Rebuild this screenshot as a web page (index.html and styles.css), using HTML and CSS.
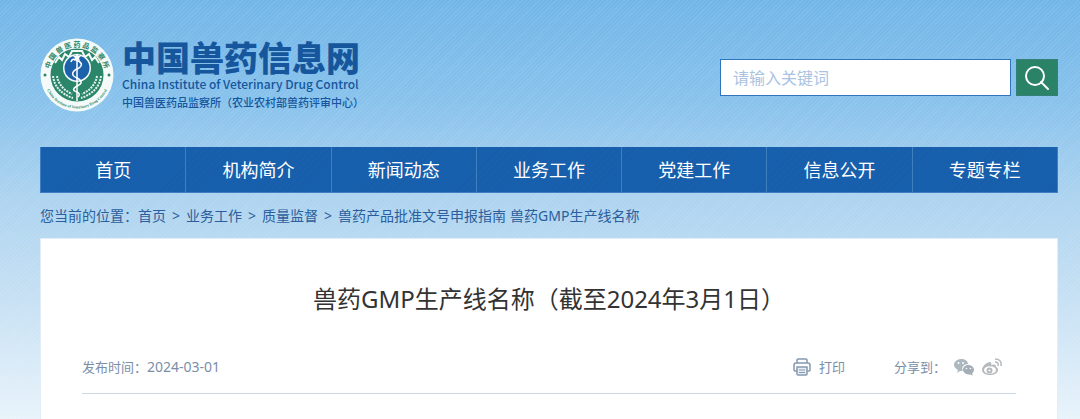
FILE: index.html
```
<!DOCTYPE html>
<html lang="zh-CN">
<head>
    <meta charset="UTF-8">
    <meta name="viewport" content="width=device-width, initial-scale=1.0">
    <title>兽药GMP生产线名称</title>
    <link rel="stylesheet" href="styles.css">
</head>
<body>
    <div class="wrapper">
        <header class="header">
            <a class="logo" href="#">
                <svg class="logo-badge" viewBox="0 0 74 74" aria-hidden="true">
                    <defs>
                        <path id="arc-top" d="M10.500 46 A28 28 0 1 1 63.500 46"/>
                        <path id="arc-bottom" d="M3.500 37 A33.500 33.500 0 0 0 70.500 37"/>
                    </defs>
                    <circle cx="37" cy="37" r="36.500" fill="#f4faf8"/>
                    <circle cx="37" cy="37" r="26.500" fill="#2a8569"/>
                    <path d="M15 25l4-6 3 3 3-6 4 3 3-6h10l3 6 4-3 3 6 3-3 4 6" fill="none" stroke="#f4faf8" stroke-width="2"/>
                    <circle cx="37" cy="30" r="14" fill="#f4faf8"/>
                    <circle cx="37" cy="30" r="12.500" fill="#1c62ab"/>
                    <g fill="none" stroke="#e3f2ec" stroke-width="2" stroke-dasharray="2 1">
                        <path d="M13 38Q15 54 33 60"/>
                        <path d="M61 38Q59 54 41 60"/>
                        <path d="M17 38Q19 50 32 56"/>
                        <path d="M57 38Q55 50 42 56"/>
                    </g>
                    <path d="M37 20v43" stroke="#fff" stroke-width="1.500"/>
                    <path d="M31 24q1-4 5-2c6 2 7 5 3 8-7 3-9 7-2 10 6 3 5 6 0 8-5 3-4 5 0 6q4 2 1 5" fill="none" stroke="#fff" stroke-width="1.500"/>
                    <path d="M37 15l1 3h3l-2 2 1 3-3-2-3 2 1-3-2-2h3z" fill="#fff"/>
                    <circle cx="5" cy="37" r="1.500" fill="#2a8569"/>
                    <circle cx="69" cy="37" r="1.500" fill="#2a8569"/>
                    <text class="badge-cn"><textPath href="#arc-top" startOffset="50%">中 国 兽 医 药 品 监 察 所</textPath></text>
                    <text class="badge-en"><textPath href="#arc-bottom" startOffset="50%">China Institute of Veterinary Drug Control</textPath></text>
                </svg>
                <span class="logo-text">
                    <strong class="logo-name">中国兽药信息网</strong>
                    <span class="logo-en">China Institute of Veterinary Drug Control</span>
                    <span class="logo-org">中国兽医药品监察所（农业农村部兽药评审中心）</span>
                </span>
            </a>
            <form class="search">
                <input class="search-input" type="text" placeholder="请输入关键词" aria-label="请输入关键词">
                <button class="search-btn" type="button" aria-label="搜索">
                    <svg viewBox="0 0 26 26" width="26" height="26"><circle cx="11" cy="11" r="9"/><path d="M17 17l7 7"/></svg>
                </button>
            </form>
        </header>

        <nav class="nav">
            <a href="#">首页</a>
            <a href="#">机构简介</a>
            <a href="#">新闻动态</a>
            <a href="#">业务工作</a>
            <a href="#">党建工作</a>
            <a href="#">信息公开</a>
            <a href="#">专题专栏</a>
        </nav>

        <div class="crumbs">
            <span>您当前的位置：</span>
            <a href="#">首页</a>
            <span class="sep">&gt;</span>
            <a href="#">业务工作</a>
            <span class="sep">&gt;</span>
            <a href="#">质量监督</a>
            <span class="sep">&gt;</span>
            <a href="#">兽药产品批准文号申报指南</a>
            <span class="current">兽药GMP生产线名称</span>
        </div>

        <main class="content">
            <h1 class="title">兽药GMP生产线名称（截至2024年3月1日）</h1>
            <div class="meta">
                <span>发布时间：<time>2024-03-01</time></span>
                <div class="tools">
                    <button class="print" type="button">
                        <svg viewBox="0 0 18 18" width="18" height="18" fill="none" stroke="#8599b0" stroke-width="1.500">
                            <path d="M4 5V2q0-1 1-1h8q1 0 1 1v3M4 13H2q-1 0-1-1V7q0-2 2-2h12q2 0 2 2v5q0 1-1 1h-2"/>
                            <path d="M4 9h10v7q0 1-1 1H5q-1 0-1-1z" fill="#e9eef3"/>
                            <path d="M6 12h6M6 14.500h6" stroke-width="1"/>
                        </svg>
                        打印
                    </button>
                    <div class="share">
                        <span>分享到：</span>
                        <a href="#" aria-label="微信">
                            <svg viewBox="0 0 20 18" width="20" height="18">
                                <path d="M7 1c4 0 7 2 7 5-5 0-7 4-5 7H6l-3 2 1-3C2 11 0 9 0 7c0-3 3-6 7-6z" fill="#adb7be"/>
                                <path d="M14 7c3 0 6 2 6 4.500 0 2-1 3-2 4l1 2-3-1c-4 0-7-2-7-5 0-2 2-4.500 5-4.500z" fill="#a3aeb6"/>
                                <g fill="#fff"><circle cx="4.500" cy="5" r="1"/><circle cx="9" cy="5" r="1"/><circle cx="12.500" cy="10.500" r=".8"/><circle cx="16.500" cy="10.500" r=".8"/></g>
                            </svg>
                        </a>
                        <a href="#" aria-label="微博">
                            <svg viewBox="0 0 20 18" width="20" height="18" fill="none" stroke="#b6b9bc">
                                <path d="M8 4c1 0 2 1 1 3 3-1 5-1 5 2 2 1 2 2 2 3 0 3-4 5-8 5s-8-2-8-5c0-4 5-8 8-8z" fill="#b6b9bc" stroke="none"/>
                                <ellipse cx="8" cy="12" rx="6" ry="3.800" fill="#fff" stroke="none"/>
                                <circle cx="7.500" cy="12.500" r="2" stroke-width="2"/>
                                <path d="M13 4q4 0 3 4M13 1q7 0 6 7" stroke-width="1.500"/>
                            </svg>
                        </a>
                    </div>
                </div>
            </div>
        </main>
    </div>
</body>
</html>
```
FILE: styles.css
```
* {
    box-sizing: border-box;
}
body {
    margin: 0;
    min-height: 100vh;
    display: flex;
    font-family: "Noto Sans", "Noto Sans CJK SC", sans-serif;
    font-size: 14px;
    color: #2a5e9c;
    background:
        repeating-linear-gradient(135deg, rgba(255, 255, 255, 0.08) 0 1px, transparent 1px 3px),
        linear-gradient(#72b6e8 0, #88c2ec 100px, #aed4f0 200px, #c4dff3 290px, #e8f3fb 419px);
}
a {
    color: inherit;
    text-decoration: none;
}
.wrapper {
    flex: 1;
    display: flex;
    flex-direction: column;
    padding: 0 22px 0 40px;
}
.header {
    display: flex;
    justify-content: space-between;
    align-items: center;
    height: 147px;
    padding-top: 3px;
}
.logo {
    display: flex;
    align-items: center;
    gap: 8px;
    color: #15569d;
}
.logo-badge {
    width: 74px;
    height: 74px;
}
.badge-cn,
.badge-en {
    font-weight: bold;
    text-anchor: middle;
    fill: #2a8569;
}
.badge-cn {
    font-family: "Noto Sans CJK SC", sans-serif;
    font-size: 7px;
}
.badge-en {
    font-family: "Liberation Serif", serif;
    font-size: 4px;
}
.logo-text {
    display: flex;
    flex-direction: column;
    font-family: "Noto Sans CJK SC", sans-serif;
    white-space: nowrap;
}
.logo-name {
    font-size: 34px;
    line-height: 38px;
    font-weight: 900;
}
.logo-en {
    font-size: 12px;
    line-height: 16px;
    font-weight: 500;
}
.logo-org {
    font-size: 11px;
    line-height: 20px;
    font-weight: 500;
}
.search {
    display: flex;
    gap: 5px;
    padding-top: 5px;
}
.search-input {
    width: 291px;
    height: 37px;
    padding: 0 12px;
    border: 1px solid #2f75bd;
    background: #fff;
    font: inherit;
    font-size: 16px;
}
.search-input::placeholder {
    color: #a9c3e1;
}
.search-btn {
    display: flex;
    align-items: center;
    justify-content: center;
    width: 42px;
    height: 37px;
    padding: 0;
    border: 1px solid #357f79;
    background: #2a8366;
}
.search-btn svg {
    fill: none;
    stroke: #fff;
    stroke-width: 2;
    stroke-linecap: round;
}
.nav {
    display: flex;
    border: 1px solid #3d7fc0;
    border-width: 0 1px 1px;
    background: repeating-linear-gradient(135deg, #1a5ca7 0 1px, #1760ad 1px 5px);
}
.nav a {
    flex: 1;
    padding-top: 1px;
    color: #fff;
    font-size: 18px;
    line-height: 44px;
    text-align: center;
}
.nav a + a {
    border-left: 1px solid #3f7fbf;
}
.crumbs {
    display: flex;
    line-height: 20px;
    padding: 13px 0 12px;
}
.sep {
    padding: 0 6px;
}
.current {
    padding-left: 4px;
}
.content {
    flex: 1;
    padding: 42px 41px 24px;
    border: 1px solid #e1eef8;
    border-bottom: 0;
    background: #fff;
    color: #7b8ea8;
}
.title {
    margin: 0;
    font-size: 24px;
    line-height: 36px;
    font-weight: normal;
    text-align: center;
    color: #333;
}
.meta {
    display: flex;
    justify-content: space-between;
    align-items: center;
    margin-top: 31px;
    height: 46px;
    padding: 0 14px 8px 0;
    border-bottom: 1px solid #cbd8e4;
    font-size: 13px;
}
.meta time {
    font-size: 14px;
}
.tools,
.print,
.share {
    display: flex;
    align-items: center;
    gap: 8px;
}
.tools {
    gap: 49px;
}
.print {
    padding: 0;
    border: 0;
    background: none;
    font: inherit;
    color: inherit;
}
.share svg {
    display: block;
}
```
